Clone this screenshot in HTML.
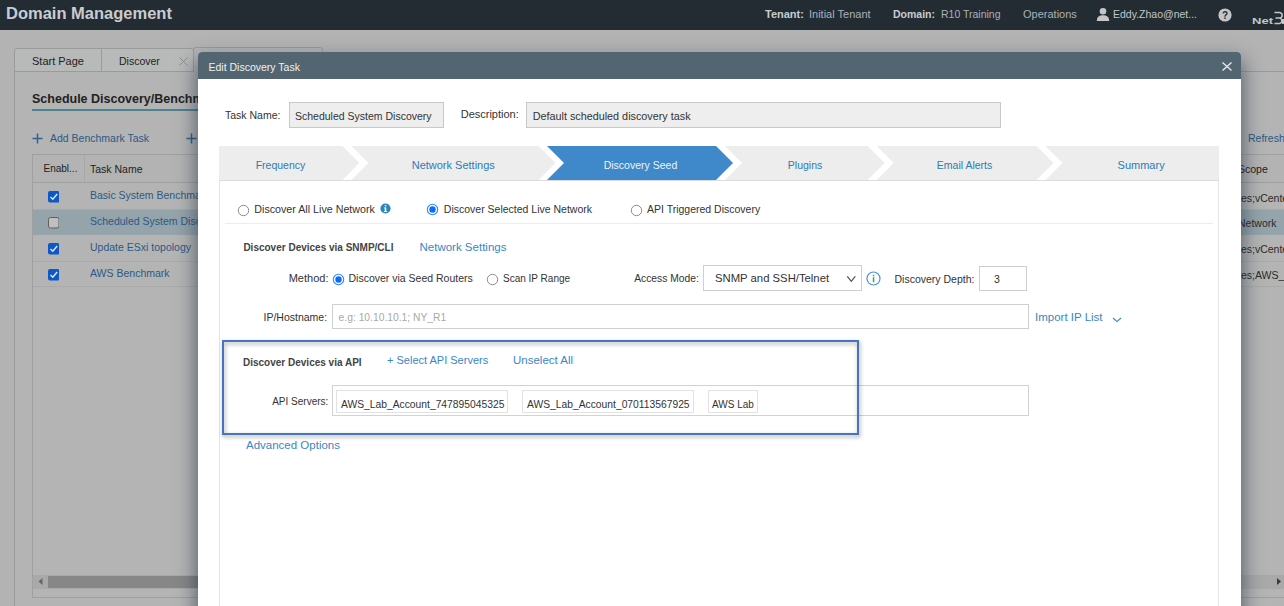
<!DOCTYPE html>
<html><head><meta charset="utf-8">
<style>
*{box-sizing:border-box;margin:0;padding:0}
html,body{width:1284px;height:606px;overflow:hidden}
body{position:relative;background:#b3b3b3;font-family:"Liberation Sans",sans-serif;color:#333}
.a{position:absolute}
.t{position:absolute;white-space:nowrap;line-height:1}
#top{left:0;top:0;width:1284px;height:30px;background:#232c33}
.bx{position:absolute;border:1px solid #9a9a9a}
</style></head><body>
<!-- ===== background page ===== -->
<div id="top" class="a"></div>
<div class="t" style="left:6px;top:5.2px;font-size:16.5px;font-weight:bold;color:#c9cdd0">Domain Management</div>
<div class="t" style="left:765px;top:8.5px;font-size:11px;font-weight:bold;color:#c8ccd0">Tenant:</div>
<div class="t" style="left:809px;top:8.5px;font-size:11px;color:#aab2b8">Initial Tenant</div>
<div class="t" style="left:893px;top:8.5px;font-size:10.5px;font-weight:bold;color:#c8ccd0">Domain:</div>
<div class="t" style="left:941px;top:8.5px;font-size:10.5px;color:#aab2b8">R10 Training</div>
<div class="t" style="left:1023px;top:8.5px;font-size:11px;color:#aab2b8">Operations</div>
<div class="t" style="left:1113px;top:8.5px;font-size:10.5px;color:#c0c6ca">Eddy.Zhao@net...</div>

<!-- panel -->
<div class="bx" style="left:14px;top:71px;width:1280px;height:560px;background:#b4b4b4"></div>
<!-- tabs -->
<div class="bx" style="left:14px;top:48px;width:88px;height:24px;background:#b8b9b9;border-radius:3px 0 0 0"></div>
<div class="bx" style="left:101px;top:48px;width:93px;height:24px;background:#b8b9b9;border-radius:0 3px 0 0"></div>
<div class="bx" style="left:193px;top:47px;width:130px;height:25px;background:#b4b4b4;border-bottom:none;border-radius:3px 3px 0 0"></div>
<div class="t" style="left:32px;top:55.6px;font-size:11px;color:#222">Start Page</div>
<div class="t" style="left:119px;top:55.6px;font-size:10.5px;color:#222">Discover</div>

<div class="t" style="left:32px;top:93.4px;font-size:12.5px;font-weight:bold;color:#222">Schedule Discovery/Benchmark</div>
<div class="a" style="left:32px;top:109px;width:900px;height:2px;background:#4e8191"></div>
<svg class="a" style="left:32px;top:133px" width="11" height="11"><path d="M5.5 0.5 V10.5 M0.5 5.5 H10.5" stroke="#2a6391" stroke-width="1.5"/></svg>
<div class="t" style="left:50px;top:133.1px;font-size:10.5px;color:#2a5a85">Add Benchmark Task</div>
<svg class="a" style="left:186px;top:133px" width="11" height="11"><path d="M5.5 0.5 V10.5 M0.5 5.5 H10.5" stroke="#2a6391" stroke-width="1.5"/></svg>
<div class="t" style="left:1248px;top:133.1px;font-size:10.5px;color:#2a5a85">Refresh</div>

<!-- table -->
<div class="bx" style="left:32px;top:154px;width:1260px;height:444px;background:#b4b4b4;border-color:#a0a0a0"></div>
<div class="a" style="left:33px;top:155px;width:1260px;height:28px;background:#b3b3b3;border-bottom:1px solid #9e9e9e"></div>
<div class="a" style="left:84px;top:155px;width:1px;height:27px;background:#a8a8a8"></div>
<div class="t" style="left:43.5px;top:164px;font-size:10px;color:#222">Enabl...</div>
<div class="t" style="left:90px;top:164px;font-size:10.5px;color:#222">Task Name</div>
<div class="t" style="left:1238px;top:164px;font-size:10.5px;color:#222">Scope</div>
<div class="a" style="left:33px;top:209px;width:1260px;height:1px;background:#a9a9a9"></div>
<div class="a" style="left:33px;top:210px;width:1260px;height:25px;background:#95a3ab"></div>
<div class="a" style="left:33px;top:261px;width:1260px;height:1px;background:#a9a9a9"></div>
<div class="a" style="left:33px;top:286px;width:1260px;height:1px;background:#a9a9a9"></div>
<!-- checkboxes -->
<svg class="a" style="left:47.5px;top:191px" width="11.5" height="11.5"><rect x="0" y="0" width="11.5" height="11.5" rx="2" fill="#0d57c6"/><path d="M2.5 6 L4.8 8.2 L9.2 3" fill="none" stroke="#dfe6f0" stroke-width="1.5"/></svg>
<svg class="a" style="left:47.5px;top:217px" width="11.5" height="11.5"><rect x="0.5" y="0.5" width="10.5" height="10.5" rx="2" fill="#bfbfbf" stroke="#5e5e5e" stroke-width="1"/></svg>
<svg class="a" style="left:47.5px;top:243px" width="11.5" height="11.5"><rect x="0" y="0" width="11.5" height="11.5" rx="2" fill="#0d57c6"/><path d="M2.5 6 L4.8 8.2 L9.2 3" fill="none" stroke="#dfe6f0" stroke-width="1.5"/></svg>
<svg class="a" style="left:47.5px;top:269px" width="11.5" height="11.5"><rect x="0" y="0" width="11.5" height="11.5" rx="2" fill="#0d57c6"/><path d="M2.5 6 L4.8 8.2 L9.2 3" fill="none" stroke="#dfe6f0" stroke-width="1.5"/></svg>
<div class="t" style="left:90px;top:189.5px;font-size:10.5px;color:#2a5a85">Basic System Benchmark</div>
<div class="t" style="left:90px;top:215.8px;font-size:10.5px;color:#2a5a85">Scheduled System Discovery</div>
<div class="t" style="left:90px;top:241.8px;font-size:10.5px;color:#2a5a85">Update ESxi topology</div>
<div class="t" style="left:90px;top:267.8px;font-size:10.5px;color:#2a5a85">AWS Benchmark</div>
<div class="t" style="left:1238px;top:193px;font-size:10.5px;color:#2b2b2b">tes;vCenter</div>
<div class="t" style="left:1238px;top:218px;font-size:10.5px;color:#2b2b2b">Network</div>
<div class="t" style="left:1238px;top:244px;font-size:10.5px;color:#2b2b2b">tes;vCenter</div>
<div class="t" style="left:1238px;top:270px;font-size:10.5px;color:#2b2b2b">tes;AWS_Lab</div>
<!-- scrollbar -->
<div class="a" style="left:33px;top:575px;width:1260px;height:14px;background:#a9a9a9"></div>
<div class="a" style="left:48px;top:576px;width:1100px;height:12px;background:#878787"></div>
<svg class="a" style="left:38px;top:578px" width="6" height="8"><path d="M0.5 3.5 L4.5 0 L4.5 7 Z" fill="#666"/></svg>
<svg class="a" style="left:1276px;top:578px" width="6" height="8"><path d="M5 3.5 L1 0 L1 7 Z" fill="#3a3a3a"/></svg>

<!-- top bar icons -->
<svg class="a" style="left:1096px;top:7px" width="14" height="15"><circle cx="7" cy="4.3" r="3.3" fill="#c6c6c6"/><path d="M0.8 14 C0.8 9.5 3.5 8.2 7 8.2 C10.5 8.2 13.2 9.5 13.2 14 Z" fill="#c6c6c6"/></svg>
<svg class="a" style="left:1218px;top:8px" width="14" height="14"><circle cx="7" cy="7" r="6.6" fill="#c2c6ca"/><text x="7" y="11" font-family="Liberation Sans" font-weight="bold" font-size="10" text-anchor="middle" fill="#232c33">?</text></svg>
<svg class="a" style="left:1252px;top:10px" width="32" height="16"><text x="0" y="13.8" font-family="Liberation Sans" font-weight="bold" font-size="9.8" textLength="21" lengthAdjust="spacingAndGlyphs" fill="#c4c6c8">Net</text><path d="M22.5 2.6 H27.5 A2.7 2.7 0 0 1 27.5 8 H23.5 M23.5 8 H28 A2.9 2.9 0 0 1 28 13.4 H22.5" fill="none" stroke="#c4c6c8" stroke-width="1.5"/><rect x="30" y="9" width="2" height="5" fill="#c4c6c8"/></svg>
<!-- discover tab x -->
<svg class="a" style="left:179px;top:57px" width="9" height="9"><path d="M0.5 0.5 L8.5 8.5 M8.5 0.5 L0.5 8.5" stroke="#8e8e8e" stroke-width="1"/></svg>

<!-- ===== modal ===== -->
<div class="a" style="left:198px;top:52px;width:1043px;height:600px;background:#fff;border-radius:4px 4px 0 0;box-shadow:0 10px 20px 2px rgba(25,40,55,0.6)"></div>
<div class="a" style="left:198px;top:52px;width:1043px;height:27px;background:#536570;border-radius:4px 4px 0 0"></div>
<div class="t" style="left:208.5px;top:61.6px;font-size:10.5px;color:#eef1f3">Edit Discovery Task</div>


<div class="a" style="left:1222px;top:62px;width:10px;height:9px">
<svg width="10" height="9" viewBox="0 0 10 9" style="position:absolute;left:0;top:0"><path d="M0.5 0.5L9.5 8.5M9.5 0.5L0.5 8.5" stroke="#e8ecef" stroke-width="1.3"/></svg></div>

<div class="t" style="left:225px;top:109.5px;font-size:10.5px;color:#333">Task Name:</div>
<div class="a" style="left:289px;top:102px;width:155px;height:26px;background:#eeeeee;border:1px solid #c8c8c8"></div>
<div class="t" style="left:295px;top:111.1px;font-size:10.5px;color:#333">Scheduled System Discovery</div>
<div class="t" style="left:460.7px;top:108.8px;font-size:11px;color:#333">Description:</div>
<div class="a" style="left:526px;top:102px;width:475px;height:26px;background:#eeeeee;border:1px solid #c8c8c8"></div>
<div class="t" style="left:532.7px;top:111.1px;font-size:10.8px;color:#333">Default scheduled discovery task</div>

<!-- wizard -->
<svg class="a" style="left:219px;top:146px" width="1000" height="35" viewBox="0 0 1000 35">
<rect x="0" y="0" width="1000" height="34" fill="#ededed"/>
<rect x="0" y="34" width="1000" height="1" fill="#dcdcdc"/>
<g fill="#ffffff">
<path d="M123.4 0 L132.4 0 L149.4 17 L132.4 34 L123.4 34 L140.4 17 Z"/>
<path d="M319.6 0 L328.6 0 L345.6 17 L328.6 34 L319.6 34 L336.6 17 Z"/>
<path d="M497 0 L506 0 L523 17 L506 34 L497 34 L514 17 Z"/>
<path d="M648.7 0 L657.7 0 L674.7 17 L657.7 34 L648.7 34 L665.7 17 Z"/>
<path d="M817.5 0 L826.5 0 L843.5 17 L826.5 34 L817.5 34 L834.5 17 Z"/>
</g>
<path d="M328 0 L497 0 L514 17 L497 34 L328 34 L345 17 Z" fill="#3f88c9"/>
</svg>
<div class="t" style="left:255.7px;top:159.8px;font-size:10.5px;color:#2f7ab4">Frequency</div>
<div class="t" style="left:411.7px;top:159.8px;font-size:11px;color:#2f7ab4">Network Settings</div>
<div class="t" style="left:603.7px;top:159.8px;font-size:10.5px;color:#eef3f8">Discovery Seed</div>
<div class="t" style="left:787.8px;top:159.8px;font-size:10.5px;color:#2f7ab4">Plugins</div>
<div class="t" style="left:936.8px;top:159.8px;font-size:10.5px;color:#2f7ab4">Email Alerts</div>
<div class="t" style="left:1117.6px;top:159.8px;font-size:11px;color:#2f7ab4">Summary</div>

<!-- content frame -->
<div class="a" style="left:219px;top:181px;width:1px;height:430px;background:#e4e4e4"></div>
<div class="a" style="left:1218px;top:181px;width:1px;height:430px;background:#e4e4e4"></div>

<!-- radio row -->
<svg class="a" style="left:237px;top:203.5px" width="13" height="13"><circle cx="6.5" cy="6.5" r="5.2" fill="#fff" stroke="#8a8a8a" stroke-width="1"/></svg>
<div class="t" style="left:254.3px;top:203.8px;font-size:10.7px;color:#333">Discover All Live Network</div>
<svg class="a" style="left:379.5px;top:203.2px" width="11" height="11"><circle cx="5.5" cy="5.5" r="5.1" fill="#2a84c0"/><rect x="4.8" y="1.9" width="1.5" height="1.5" fill="#fff"/><path d="M3.9 4.4 H6.3 V8.1 H7.1 V9 H3.9 V8.1 H4.7 V5.3 H3.9 Z" fill="#fff"/></svg>
<svg class="a" style="left:426px;top:203px" width="13" height="13"><circle cx="6.5" cy="6.5" r="5.2" fill="#fff" stroke="#3087ff" stroke-width="1.1"/><circle cx="6.5" cy="6.5" r="3.2" fill="#0a6cff"/></svg>
<div class="t" style="left:443.8px;top:204px;font-size:10.5px;color:#333">Discover Selected Live Network</div>
<svg class="a" style="left:630px;top:203.5px" width="13" height="13"><circle cx="6.5" cy="6.5" r="5.2" fill="#fff" stroke="#8a8a8a" stroke-width="1"/></svg>
<div class="t" style="left:647px;top:204px;font-size:10.5px;color:#333">API Triggered Discovery</div>
<div class="a" style="left:225px;top:223px;width:988px;height:1px;background:#ececec"></div>

<div class="t" style="left:243.4px;top:243px;font-size:10px;font-weight:bold;color:#444">Discover Devices via SNMP/CLI</div>
<div class="t" style="left:419.5px;top:242px;font-size:11.5px;color:#3a86c6">Network Settings</div>

<div class="t" style="left:288.7px;top:272.5px;font-size:11px;color:#333">Method:</div>
<svg class="a" style="left:331.5px;top:272.5px" width="13" height="13"><circle cx="6.5" cy="6.5" r="5.2" fill="#fff" stroke="#3087ff" stroke-width="1.1"/><circle cx="6.5" cy="6.5" r="3.2" fill="#0a6cff"/></svg>
<div class="t" style="left:348.5px;top:272.5px;font-size:10.5px;color:#333">Discover via Seed Routers</div>
<svg class="a" style="left:486px;top:272.5px" width="13" height="13"><circle cx="6.5" cy="6.5" r="5.2" fill="#fff" stroke="#8a8a8a" stroke-width="1"/></svg>
<div class="t" style="left:503px;top:273.8px;font-size:10px;color:#333">Scan IP Range</div>

<div class="t" style="left:634.2px;top:274px;font-size:10.3px;color:#333">Access Mode:</div>
<div class="a" style="left:703px;top:265px;width:159px;height:26px;background:#fff;border:1px solid #cfcfcf"></div>
<div class="t" style="left:715px;top:273px;font-size:11.3px;color:#333">SNMP and SSH/Telnet</div>
<svg class="a" style="left:846px;top:275px" width="11" height="8"><path d="M1.3 1.3 L5.3 6.3 L9.3 1.3" fill="none" stroke="#555" stroke-width="1.3"/></svg>
<svg class="a" style="left:866px;top:271px" width="15" height="15"><circle cx="7.5" cy="7.5" r="6.5" fill="#fff" stroke="#4a93cf" stroke-width="1.2"/><rect x="6.8" y="6.2" width="1.5" height="5" fill="#3aa55c"/><rect x="6.8" y="3.8" width="1.5" height="1.5" fill="#3aa55c"/></svg>
<div class="t" style="left:894.5px;top:273.5px;font-size:10.5px;color:#333">Discovery Depth:</div>
<div class="a" style="left:979px;top:266px;width:48px;height:25px;background:#fff;border:1px solid #cfcfcf"></div>
<div class="t" style="left:994px;top:274px;font-size:10.5px;color:#333">3</div>

<div class="t" style="left:263.5px;top:312.1px;font-size:10.5px;color:#333">IP/Hostname:</div>
<div class="a" style="left:332px;top:304px;width:697px;height:25px;background:#fff;border:1px solid #cfcfcf"></div>
<div class="t" style="left:338.6px;top:312.6px;font-size:10.3px;color:#a9a9a9">e.g: 10.10.10.1; NY_R1</div>
<div class="t" style="left:1035px;top:312px;font-size:11.5px;color:#3a87c0">Import IP List</div>
<svg class="a" style="left:1111.5px;top:316.5px" width="10" height="6"><path d="M1 1 L5 4.6 L9 1" fill="none" stroke="#3a87c0" stroke-width="1.1"/></svg>

<!-- API box -->
<div class="t" style="left:243px;top:357.7px;font-size:10px;font-weight:bold;color:#444">Discover Devices via API</div>
<div class="t" style="left:387px;top:355px;font-size:11px;color:#3a86c6">+ Select API Servers</div>
<div class="t" style="left:513px;top:355.3px;font-size:11.5px;color:#3a86c6">Unselect All</div>
<div class="t" style="left:272.2px;top:396.7px;font-size:10px;color:#333">API Servers:</div>
<div class="a" style="left:332px;top:385px;width:697px;height:31px;background:#fff;border:1px solid #d2d2d2"></div>
<div class="a" style="left:336px;top:390px;width:172px;height:23px;border:1px solid #e2e2e2"></div>
<div class="a" style="left:522px;top:390px;width:172px;height:23px;border:1px solid #e2e2e2"></div>
<div class="a" style="left:708px;top:390px;width:50px;height:23px;border:1px solid #e2e2e2"></div>
<div class="t" style="left:341px;top:400.3px;font-size:10.3px;color:#333">AWS_Lab_Account_747895045325</div>
<div class="t" style="left:527px;top:400.3px;font-size:10.3px;color:#333">AWS_Lab_Account_070113567925</div>
<div class="t" style="left:712px;top:400.3px;font-size:10px;color:#333">AWS Lab</div>

<div class="a" style="left:222px;top:340px;width:636.5px;height:95px;border:2px solid #4673c6;filter:drop-shadow(1px 2px 2px rgba(0,0,0,0.38))"></div>
<div class="t" style="left:246px;top:440.2px;font-size:11.5px;color:#3a86c6">Advanced Options</div>
</body></html>
